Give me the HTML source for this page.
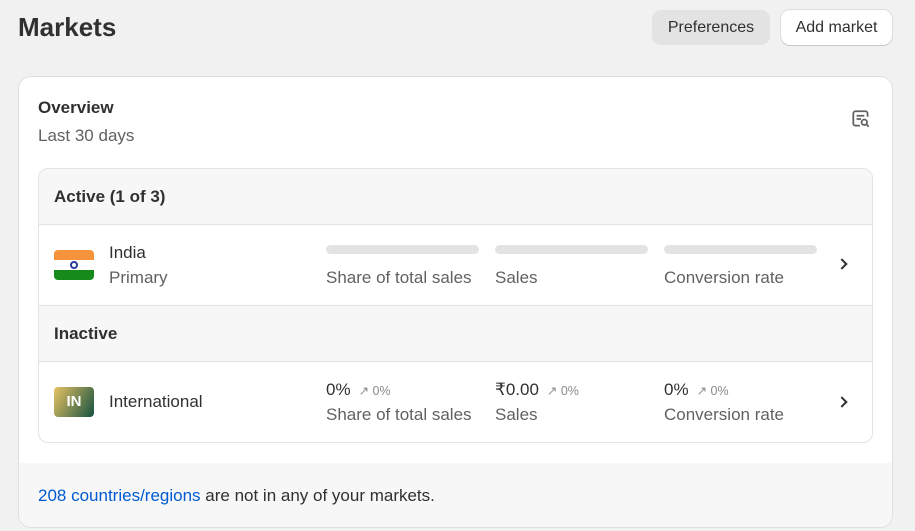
<!DOCTYPE html><html><head><style>
*{box-sizing:border-box;margin:0;padding:0}
body{width:915px;height:531px;background:#f1f1f1;font-family:"Liberation Sans",sans-serif;color:#303030;position:relative;overflow:hidden;font-size:17px}
.a{position:absolute}
.btn{position:absolute;top:10px;height:35px;border-radius:9px;font-size:16px;line-height:35px;text-align:center}
.card{left:18px;top:76px;width:875px;height:452px;background:#fff;border-radius:13px;border:1px solid #e0e0e0;overflow:hidden}
.box{left:19px;top:91px;width:835px;height:275px;border:1px solid #e3e3e3;border-radius:10px;overflow:hidden}
.row{position:absolute;left:0;width:100%;border-bottom:1px solid #e3e3e3}
.g{color:#616161}
.bar{position:absolute;top:20px;width:153px;height:9px;border-radius:5px;background:#e3e3e3}
.chev{position:absolute;width:8px;height:8px;border-right:2px solid #303030;border-top:2px solid #303030;transform:rotate(45deg)}
.sm{font-size:12.5px;color:#8a8a8a;margin-left:8px}
</style></head><body>
<div class="a" style="left:18px;top:12px;font-size:26px;font-weight:bold">Markets</div>
<div class="btn" style="left:652px;width:118px;background:#e3e3e3">Preferences</div>
<div class="btn" style="left:781px;width:111px;background:#fff;box-shadow:0 1px 0 #c8c8c8,0 0 0 1px #ddd">Add market</div>
<div class="a card">
 <div class="a" style="left:19px;top:21px;font-weight:bold;font-size:17px">Overview</div>
 <div class="a g" style="left:19px;top:49px">Last 30 days</div>
 <svg class="a" style="left:831px;top:31px" width="22" height="22" viewBox="0 0 20 20" fill="none" stroke="#616161" stroke-width="1.6"><path d="M9 16H5a2 2 0 0 1-2-2V5a2 2 0 0 1 2-2h9a2 2 0 0 1 2 2v3"/><path d="M6 7h7M6 10h4"/><circle cx="13" cy="13" r="2.5"/><path d="M15 15l2 2"/></svg>
 <div class="a box">
  <div class="row" style="top:0;height:56px;background:#f7f7f7"><div class="a" style="left:15px;top:18px;font-weight:bold">Active (1 of 3)</div></div>
  <div class="row" style="top:56px;height:81px">
   <div class="a" style="left:15px;top:25px;width:40px;height:30px;border-radius:4px;overflow:hidden;background:linear-gradient(#f7933a 0 33%,#fff 33% 67%,#168b1c 67%)"><div class="a" style="left:16px;top:11px;width:8px;height:8px;border-radius:50%;border:2px solid #2a3b9c"></div></div>
   <div class="a" style="left:70px;top:18px">India</div>
   <div class="a g" style="left:70px;top:43px">Primary</div>
   <div class="bar" style="left:287px"></div><div class="bar" style="left:456px"></div><div class="bar" style="left:625px"></div>
   <div class="a g" style="left:287px;top:43px">Share of total sales</div>
   <div class="a g" style="left:456px;top:43px">Sales</div>
   <div class="a g" style="left:625px;top:43px">Conversion rate</div>
   <div class="chev" style="left:799px;top:35px"></div>
  </div>
  <div class="row" style="top:137px;height:56px;background:#f7f7f7"><div class="a" style="left:15px;top:18px;font-weight:bold">Inactive</div></div>
  <div class="row" style="top:193px;height:82px;border:none">
   <div class="a" style="left:15px;top:25px;width:40px;height:30px;border-radius:4px;background:linear-gradient(120deg,#e8c264,#155240);color:#fff;font-weight:bold;font-size:15px;text-align:center;line-height:30px">IN</div>
   <div class="a" style="left:70px;top:30px">International</div>
   <div class="a" style="left:287px;top:18px">0%<span class="sm">↗ 0%</span></div>
   <div class="a" style="left:456px;top:18px">₹0.00<span class="sm">↗ 0%</span></div>
   <div class="a" style="left:625px;top:18px">0%<span class="sm">↗ 0%</span></div>
   <div class="a g" style="left:287px;top:43px">Share of total sales</div>
   <div class="a g" style="left:456px;top:43px">Sales</div>
   <div class="a g" style="left:625px;top:43px">Conversion rate</div>
   <div class="chev" style="left:799px;top:36px"></div>
  </div>
 </div>
 <div class="a" style="left:0;top:386px;width:100%;height:66px;background:#f7f7f7"><div class="a" style="left:19px;top:23px"><span style="color:#005bd3">208 countries/regions</span> are not in any of your markets.</div></div>
</div>
</body></html>
